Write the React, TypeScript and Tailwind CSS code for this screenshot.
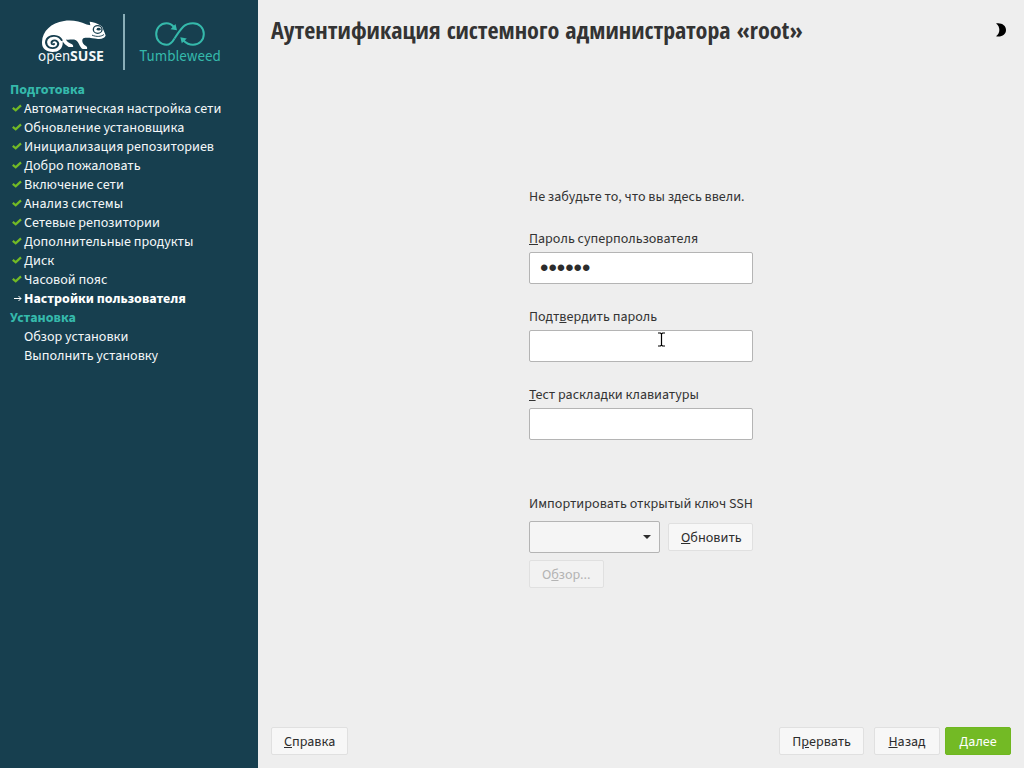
import type { ReactNode } from "react";

type State = "done" | "current" | "todo";

const stages: { title: string; steps: { label: string; state: State }[] }[] = [
  {
    title: "Подготовка",
    steps: [
      { label: "Автоматическая настройка сети", state: "done" },
      { label: "Обновление установщика", state: "done" },
      { label: "Инициализация репозиториев", state: "done" },
      { label: "Добро пожаловать", state: "done" },
      { label: "Включение сети", state: "done" },
      { label: "Анализ системы", state: "done" },
      { label: "Сетевые репозитории", state: "done" },
      { label: "Дополнительные продукты", state: "done" },
      { label: "Диск", state: "done" },
      { label: "Часовой пояс", state: "done" },
      { label: "Настройки пользователя", state: "current" },
    ],
  },
  {
    title: "Установка",
    steps: [
      { label: "Обзор установки", state: "todo" },
      { label: "Выполнить установку", state: "todo" },
    ],
  },
];

function StepMark({ state }: { state: State }) {
  return (
    <span className="flex w-3 shrink-0">
      {state === "done" && (
        <svg viewBox="0 0 10 8" className="mb-1 h-2 w-2.5" aria-hidden="true">
          <path d="M.8 3.800 3.700 6.300 9 1.300" fill="none" stroke="#73ba25" strokeWidth="2.300" />
        </svg>
      )}
      {state === "current" && (
        <svg viewBox="0 0 8 8" className="mb-1 ml-0.5 h-2 w-2" aria-hidden="true">
          <path d="M0 4.500H7M4.500 2 7 4.500 4.500 7" fill="none" stroke="#fff" strokeWidth="1" />
        </svg>
      )}
    </span>
  );
}

function Chameleon() {
  return (
    <svg viewBox="36 18 192 108" preserveAspectRatio="none" className="h-8 w-16" aria-hidden="true">
      <path
        fill="#fff"
        d="M36 96C35 58 62 27 102 21C128 18 148 22 170 33L181 36L179 24C196 26 210 33 217 42C220 52 224 60 227 70C225 78 216 83 204 82C186 80 172 76 160 80C153 86 158 100 168 106C172 109 172 113 171 116H158C148 108 148 94 138 86C128 82 118 86 108 84C110 92 118 96 126 100C130 103 130 107 129 109H116C107 104 101 96 98 90C100 112 88 126 68 126C49 126 36 114 36 96Z"
      />
      <path
        fill="none"
        stroke="#173f4f"
        strokeWidth="6"
        strokeLinecap="round"
        d="M95 86C86 68 60 67 51 82C43 98 53 113 68 113C83 113 89 98 81 90C74 83 63 88 65 97C66 100 70 101 72 99"
      />
      <circle cx="203" cy="50" r="13" fill="none" stroke="#173f4f" strokeWidth="4" />
      <ellipse cx="206" cy="49" rx="6" ry="4.500" fill="#173f4f" />
      <path d="M186 69C200 76 214 74 222 67" fill="none" stroke="#173f4f" strokeWidth="3" />
    </svg>
  );
}

function Tumbleweed() {
  return (
    <svg viewBox="0 0 50 26" className="h-[26px] w-[50px]" aria-hidden="true">
      <g fill="none" stroke="#35b9ab" strokeWidth="2">
        <path d="M19.500 17.500C17.500 21 15 23.800 11.500 23.800C5.500 23.800 1.200 19 1.200 13S5.500 2.200 11.500 2.200C15 2.200 17 3.700 19 6" />
        <path d="M19.500 17.500C23 12 25.500 8.500 28.500 5.500C31 3 34.500 2.200 38 2.200C44.500 2.200 48.800 7 48.800 13S44.500 23.800 38 23.800C34 23.800 31.200 22.300 28.500 19.500" />
      </g>
      <path d="M22 9.200 15.500 8.200 20.500 3Z M25.300 16.300 31.800 17.400 26.800 22.200Z" fill="#35b9ab" />
    </svg>
  );
}

function Button({ children, primary, disabled }: { children: ReactNode; primary?: boolean; disabled?: boolean }) {
  const look = primary
    ? "border-[#6fb71f] bg-[#73ba25] text-white"
    : disabled
      ? "border-[#e0e0e0] bg-[#f2f2f2] text-[#b4b4b4]"
      : "border-[#e0e0e0] bg-[#f7f7f7] text-[#2c2c2c]";
  return (
    <button type="button" disabled={disabled} className={`h-7 min-w-[66px] rounded-xs border px-3 pt-0.5 ${look}`}>
      {children}
    </button>
  );
}

function Field({ id, label, type, value, children }: { id: string; label: ReactNode; type: string; value?: string; children?: ReactNode }) {
  return (
    <div className="relative flex flex-col gap-[3px]">
      <label htmlFor={id}>{label}</label>
      <input
        id={id}
        type={type}
        defaultValue={value}
        className="h-8 w-full rounded-xs border border-[#b4b4b4] bg-white px-2.5 font-['Liberation_Sans',sans-serif] text-[24px] text-[#2c2c2c] outline-none"
      />
      {children}
    </div>
  );
}

export default function App() {
  return (
    <div className="flex min-h-screen bg-[#eeeeee] font-['Source_Sans_3','Noto_Sans',sans-serif] text-[14px] leading-5 text-[#333333]">
      <aside className="w-[258px] shrink-0 bg-[#173f4f] text-[#f4f8f9]">
        <header className="flex h-[81px] items-start pt-3.5">
          <div className="ml-[38px] flex w-[68px] flex-col pt-1.5">
            <div className="flex justify-end">
              <Chameleon />
            </div>
            <span className="-mt-1 flex items-baseline leading-4">
              <span className="text-[15px]">open</span>
              <b className="font-['Open_Sans','Noto_Sans',sans-serif] text-[14px]">SUSE</b>
            </span>
          </div>
          <div className="ml-[17px] h-14 w-0.5 bg-[#8aaeb8]" />
          <div className="ml-[15px] flex w-20 flex-col items-center pt-[7px] text-[#35b9ab]">
            <Tumbleweed />
            <span className="text-[15px] leading-5">Tumbleweed</span>
          </div>
        </header>
        <nav className="leading-[19px]">
          {stages.map((stage) => (
            <section key={stage.title}>
              <h2 className="pl-2.5 font-bold text-[#35b9ab]">{stage.title}</h2>
              <ol>
                {stage.steps.map((step) => (
                  <li key={step.label} className={step.state === "current" ? "flex items-center pl-3 font-bold text-white" : "flex items-center pl-3"}>
                    <StepMark state={step.state} />
                    {step.label}
                  </li>
                ))}
              </ol>
            </section>
          ))}
        </nav>
      </aside>

      <main className="flex min-w-0 flex-1 flex-col px-[13px] pb-[13px]">
        <header className="flex h-15 items-center justify-between pr-1">
          <h1 className="font-['Open_Sans_Condensed','Open_Sans',sans-serif] text-[24px] leading-8 font-bold text-[#333333]">
            Аутентификация системного администратора «root»
          </h1>
          <button type="button" aria-label="Тёмная тема" className="h-4 w-3">
            <svg viewBox="0 0 12 16" className="h-4 w-3" aria-hidden="true">
              <path d="M1 1.500C6.500 .5 11 3.500 11 8S6.500 15.500 1 14.300C5.500 11.500 5.500 4.500 1 1.500Z" fill="#000" />
            </svg>
          </button>
        </header>

        <form className="flex flex-1 items-center justify-center pb-3">
          <div className="w-56">
            <p>Не забудьте то, что вы здесь ввели.</p>
            <div className="mt-[22px] flex flex-col gap-[23px]">
              <Field id="password" type="password" value="secret" label={<><u>П</u>ароль суперпользователя</>} />
              <Field id="confirm" type="password" label={<>Подт<u>в</u>ердить пароль</>}>
                <svg viewBox="0 0 9 15" className="pointer-events-none absolute top-[25px] left-32 h-[15px] w-[9px]" aria-hidden="true">
                  <path d="M1 1H3.500L4.500 2 5.500 1H8M4.500 2V13M1 14H3.500L4.500 13 5.500 14H8" fill="none" stroke="#000" strokeWidth="1.200" />
                </svg>
              </Field>
              <Field id="layout" type="text" label={<><u>Т</u>ест раскладки клавиатуры</>} />
            </div>
            <div className="mt-[54px]">
              <label htmlFor="ssh" className="whitespace-nowrap">Импортировать открытый ключ SSH</label>
              <div className="mt-[7px] flex items-center gap-2">
                <div className="relative w-[131px] shrink-0">
                  <select id="ssh" className="block h-8 w-full appearance-none rounded-xs border border-[#b4b4b4] bg-[#f5f5f5] px-2.5" />
                  <svg viewBox="0 0 8 4" className="pointer-events-none absolute top-3.5 right-[9px] h-1 w-2" aria-hidden="true">
                    <path d="M0 0H8L4 4Z" fill="#2c2c2c" />
                  </svg>
                </div>
                <Button><u>О</u>бновить</Button>
              </div>
              <div className="mt-[7px] flex">
                <Button disabled>О<u>б</u>зор...</Button>
              </div>
            </div>
          </div>
        </form>

        <footer className="flex items-center">
          <Button><u>С</u>правка</Button>
          <div className="ml-auto flex items-center gap-[5px]">
            <div className="mr-[5px] flex"><Button>П<u>р</u>ервать</Button></div>
            <Button><u>Н</u>азад</Button>
            <Button primary><u>Д</u>алее</Button>
          </div>
        </footer>
      </main>
    </div>
  );
}
